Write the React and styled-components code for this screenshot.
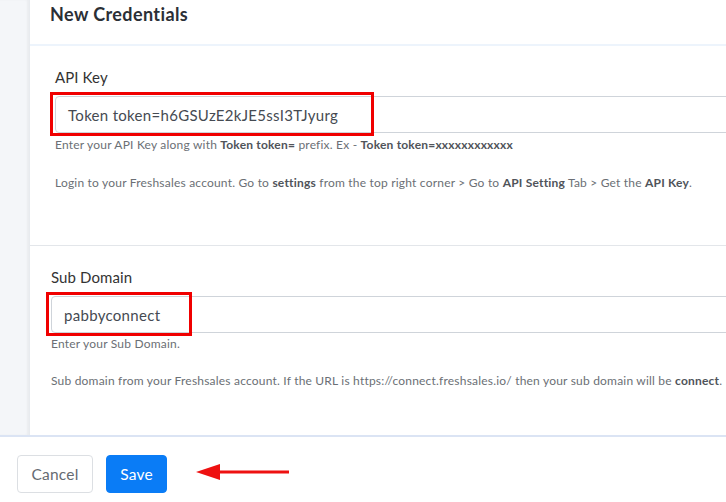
import React from "react";
import styled, { createGlobalStyle } from "styled-components";

const Global = createGlobalStyle`
  html, body { margin: 0; padding: 0; background: #fff; }
  body { font-family: Lato, "Open Sans", Arial, sans-serif; }
  * { box-sizing: border-box; }
`;

const Page = styled.div`
  width: 726px;
  height: 502px;
  display: flex;
  flex-direction: column;
  overflow: hidden;
`;

const Main = styled.div`
  display: flex;
  height: 435px;
`;

const Sidebar = styled.div`
  width: 30px;
  flex: none;
  background: #f4f6f9;
  box-shadow: inset -2px 0 2px rgba(0, 0, 0, 0.04);
  border-right: 1px solid #e8ebef;
`;

const Content = styled.div`
  flex: 1;
  min-width: 0;
  display: flex;
  flex-direction: column;
  overflow: hidden;
`;

const Header = styled.div`
  height: 46px;
  flex: none;
  display: flex;
  align-items: flex-start;
  padding: 4px 0 0 20px;
  border-bottom: 2px solid #edf4fc;
`;

const Title = styled.h2`
  margin: 0;
  font-size: 18px;
  line-height: 20px;
  font-weight: 700;
  letter-spacing: 0.4px;
  color: #2b2f36;
`;

const Section = styled.div`
  padding: 21px 0 0 ${(p) => p.$indent}px;
  height: ${(p) => p.$height}px;
  flex: none;
  border-bottom: ${(p) => (p.$divider ? "1px solid #e3e6ea" : "none")};
`;

const Label = styled.div`
  font-size: 15px;
  line-height: 20px;
  letter-spacing: 0.1px;
  color: #333;
  margin-bottom: 9px;
`;

const Field = styled.div`
  position: relative;
`;

const Input = styled.div`
  width: 800px;
  height: 37px;
  border: 1px solid #cfd4da;
  border-radius: 4px;
  padding: 0 12px;
  display: flex;
  align-items: center;
  font-size: 15px;
  letter-spacing: 0.3px;
  color: #454a52;
`;

const Highlight = styled.div`
  position: absolute;
  left: -5px;
  top: -4px;
  width: ${(p) => p.$w}px;
  height: 44px;
  border: 3px solid #f00000;
  pointer-events: none;
`;

const Help = styled.p`
  margin: ${(p) => p.$top}px 0 0;
  font-size: 12px;
  line-height: 16px;
  letter-spacing: 0.2px;
  color: #6b6f75;
  white-space: nowrap;

  b {
    color: #50545a;
    font-weight: 700;
  }
`;

const Footer = styled.div`
  flex: 1;
  border-top: 2px solid #dbe4f4;
  display: flex;
  align-items: flex-start;
  padding: 18px 0 0 17px;
  gap: 13px;
`;

const Button = styled.button`
  height: 38px;
  padding: 0;
  border-radius: 4px;
  font-family: inherit;
  font-size: 15.5px;
  letter-spacing: 0.2px;
  border: 1px solid ${(p) => (p.$primary ? "#0a7cf6" : "#dcdfe3")};
  background: ${(p) => (p.$primary ? "#0a7cf6" : "#fff")};
  color: ${(p) => (p.$primary ? "#fff" : "#666b72")};
  cursor: pointer;
  width: ${(p) => p.$w}px;
`;

const ArrowBox = styled.div`
  margin: 8px 0 0 16px;
  display: flex;
`;

export default function App() {
  return (
    <>
      <Global />
      <Page>
        <Main>
          <Sidebar />
          <Content>
            <Header>
              <Title>New Credentials</Title>
            </Header>
            <Section $indent={25} $height={200} $divider>
              <Label>API Key</Label>
              <Field>
                <Input>Token token=h6GSUzE2kJE5ssI3TJyurg</Input>
                <Highlight $w={324} />
              </Field>
              <Help $top={4}>
                Enter your API Key along with <b>Token token=</b> prefix. Ex - <b>Token token=xxxxxxxxxxxx</b>
              </Help>
              <Help $top={22}>
                Login to your Freshsales account. Go to <b>settings</b> from the top right corner &gt; Go to <b>API Setting</b> Tab &gt; Get the <b>API Key</b>.
              </Help>
            </Section>
            <Section $indent={21} $height={189}>
              <Label>Sub Domain</Label>
              <Field>
                <Input>pabbyconnect</Input>
                <Highlight $w={146} />
              </Field>
              <Help $top={3}>Enter your Sub Domain.</Help>
              <Help $top={21}>
                Sub domain from your Freshsales account. If the URL is https://connect.freshsales.io/ then your sub domain will be <b>connect</b>.
              </Help>
            </Section>
          </Content>
        </Main>
        <Footer>
          <Button $w={76}>Cancel</Button>
          <Button $primary $w={61}>Save</Button>
          <ArrowBox>
            <svg width="94" height="18" viewBox="0 0 94 18">
              <line x1="20" y1="9" x2="93" y2="9" stroke="#ee1111" strokeWidth="3" />
              <polygon points="0,9 24,1 24,17" fill="#ee1111" />
            </svg>
          </ArrowBox>
        </Footer>
      </Page>
    </>
  );
}
